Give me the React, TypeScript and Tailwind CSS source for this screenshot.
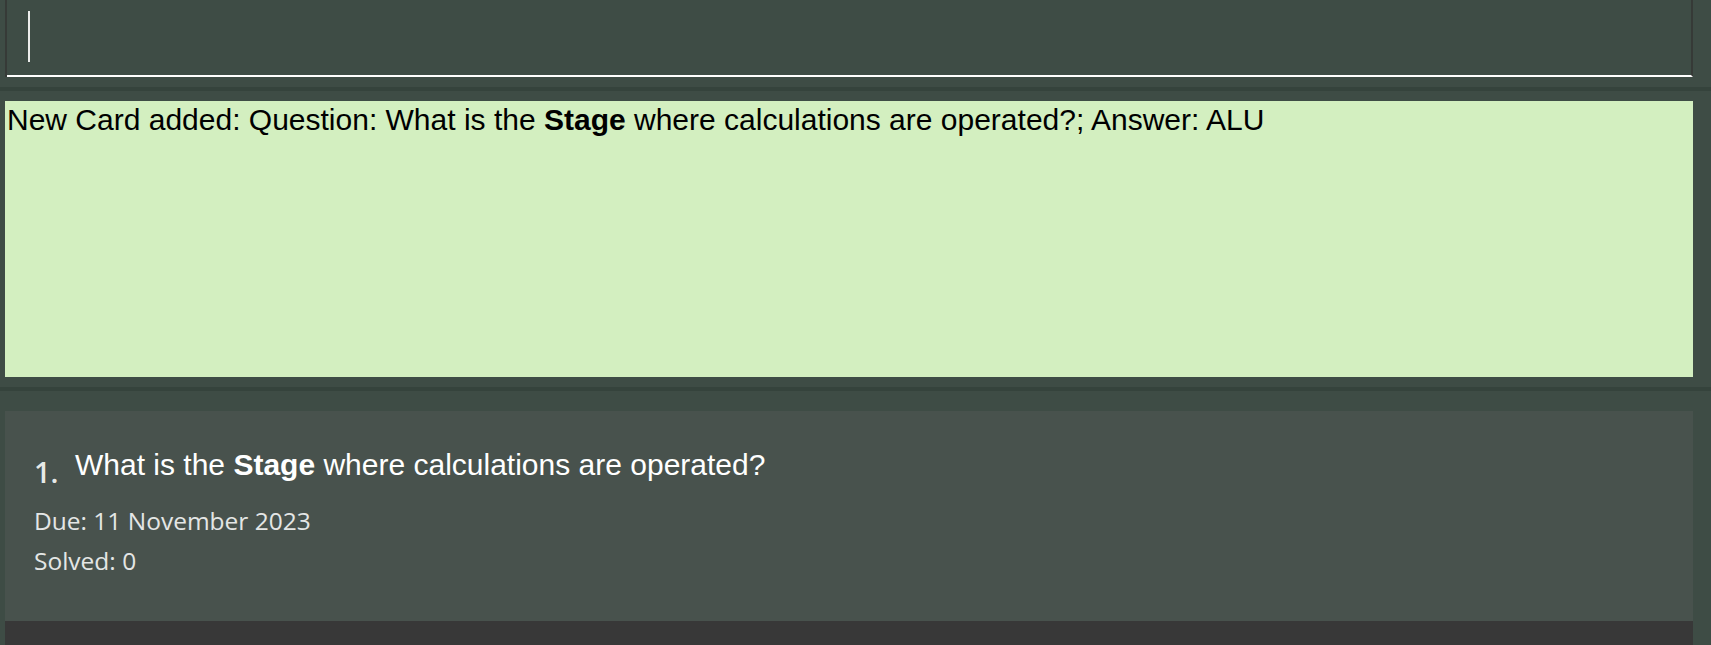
import React from "react";

const ARIAL = "font-['Liberation_Sans',Arial,sans-serif]";
const SEGOE = "font-['Open_Sans','Noto_Sans',sans-serif]";

const CommandBox: React.FC = () => (
  <div className="h-[77px] ml-[5px] mr-[18px] border-l-2 border-[#363a37]">
    <div className="h-full border-r-2 border-b-2 border-r-[#363a37] border-b-white pl-[21px] pt-[11px]">
      <div className="w-[2px] h-[51px] bg-white/90" />
    </div>
  </div>
);

const Divider: React.FC = () => <div className="h-[4px] bg-[#35433c]" />;

const ResultBox: React.FC = () => (
  <div className={`h-[276px] ml-[5px] mr-[18px] bg-[#d3efc0] px-[2px] pt-[2px] text-[30px] leading-[33px] text-black ${ARIAL}`}>
    New Card added: Question: What is the <b>Stage</b> where calculations are operated?; Answer: ALU
  </div>
);

const FlashCard: React.FC = () => (
  <div className="h-[210px] bg-[#48524d] pl-[29px] pt-[37px]">
    <div className="flex items-start">
      <span className={`mt-[7px] w-[41px] shrink-0 text-[29px] leading-[33px] font-semibold text-[#e6e9e7] ${SEGOE}`}>1.</span>
      <span className={`text-[30px] leading-[33px] text-white ${ARIAL}`}>
        What is the <b>Stage</b> where calculations are operated?
      </span>
    </div>
    <div className={`mt-[13px] text-[24.5px] leading-[40px] text-[#e4e6e5] ${SEGOE}`}>
      <div>Due: 11 November 2023</div>
      <div>Solved: 0</div>
    </div>
  </div>
);

export default function App() {
  return (
    <div className="w-[1711px] h-[645px] overflow-hidden bg-[#3e4c45]">
      <CommandBox />
      <div className="h-[10px]" />
      <Divider />
      <div className="h-[10px]" />
      <ResultBox />
      <div className="h-[10px]" />
      <Divider />
      <div className="h-[20px]" />
      <div className="ml-[5px] mr-[18px]">
        <FlashCard />
        <div className="h-[40px] bg-[#383838]" />
      </div>
    </div>
  );
}
